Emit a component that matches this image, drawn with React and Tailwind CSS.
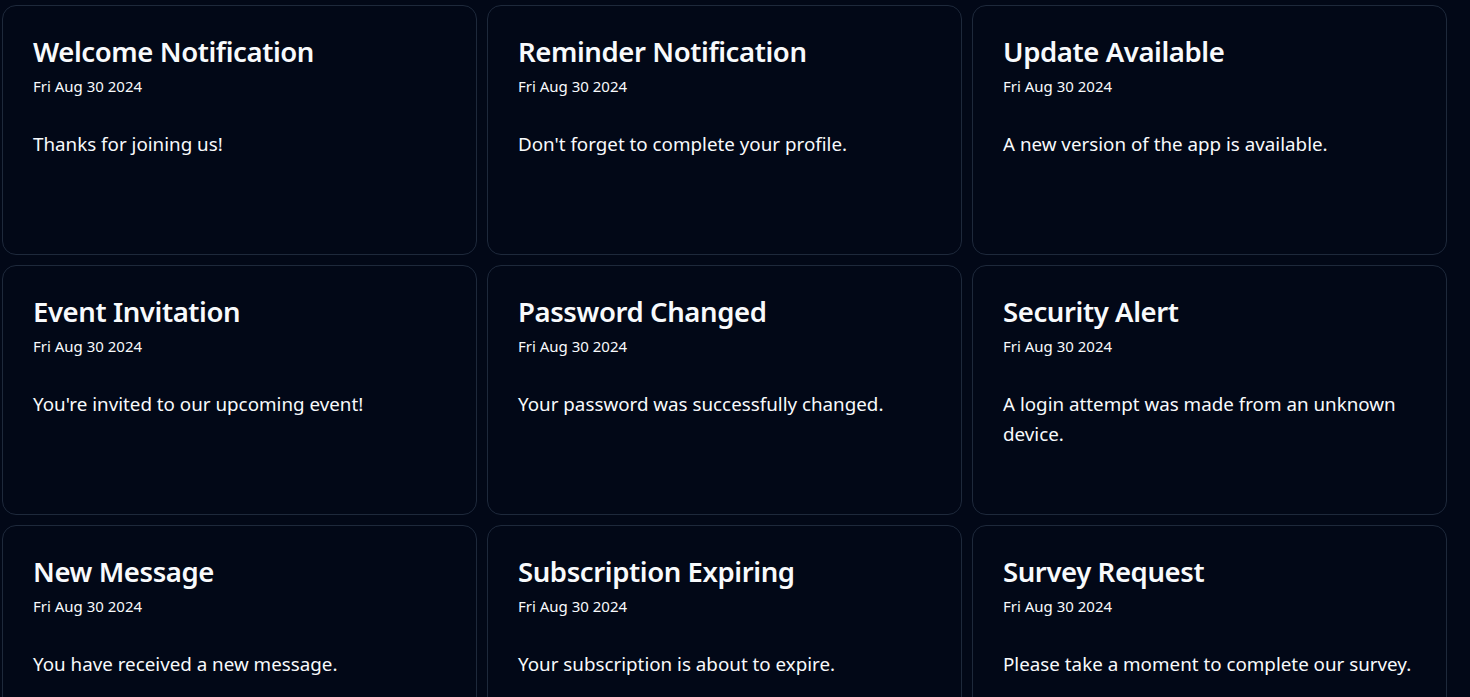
const notifications = [
  { title: "Welcome Notification", body: "Thanks for joining us!" },
  { title: "Reminder Notification", body: "Don't forget to complete your profile." },
  { title: "Update Available", body: "A new version of the app is available." },
  { title: "Event Invitation", body: "You're invited to our upcoming event!" },
  { title: "Password Changed", body: "Your password was successfully changed." },
  { title: "Security Alert", body: "A login attempt was made from an unknown device." },
  { title: "New Message", body: "You have received a new message." },
  { title: "Subscription Expiring", body: "Your subscription is about to expire." },
  { title: "Survey Request", body: "Please take a moment to complete our survey." },
];

function NotificationCard({ title, body }) {
  return (
    <div className="h-[250px] rounded-[14px] border border-[#1e293b] bg-[#020817] pl-[30px] pr-[30px] pt-[28px] text-[#f8fafc]">
      <h3 className="text-[27.5px] font-semibold leading-[36px] tracking-[-0.4px]">{title}</h3>
      <p className="mt-[6px] text-[15px] leading-[20px]">Fri Aug 30 2024</p>
      <p className="mt-[33px] text-[18.8px] leading-[30px]">{body}</p>
    </div>
  );
}

export default function App() {
  return (
    <div
      className="min-h-screen bg-[#020817] pl-[2px] pt-[5px] pb-[10px]"
      style={{ fontFamily: '"Noto Sans", "Open Sans", sans-serif' }}
    >
      <div className="grid w-[1445px] grid-cols-3 gap-x-[10px] gap-y-[10px]">
        {notifications.map((n) => (
          <NotificationCard key={n.title} {...n} />
        ))}
      </div>
    </div>
  );
}
